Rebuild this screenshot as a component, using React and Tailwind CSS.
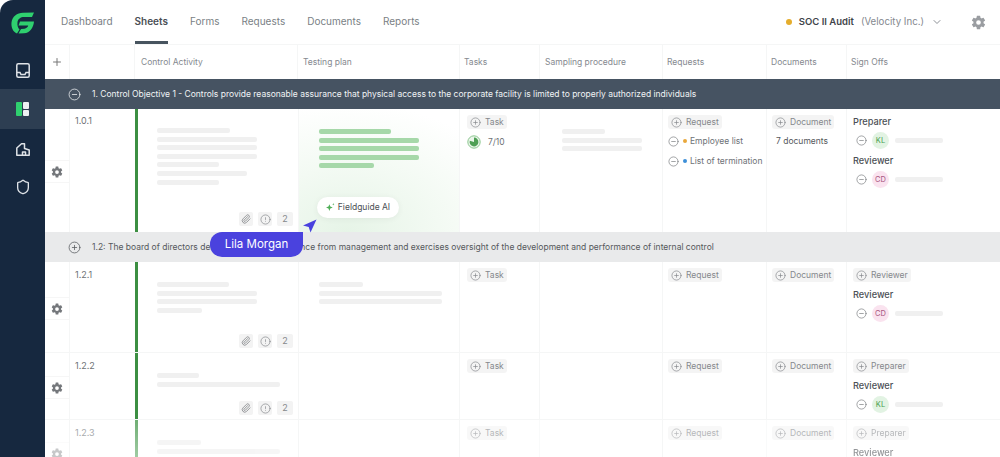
import React from 'react';
import { ChevronDown, CircleAlert, CircleMinus, CirclePlus, Paperclip, Plus, Shield } from 'lucide-react';
import { IoSettingsSharp } from 'react-icons/io5';

const tabs = ['Dashboard', 'Sheets', 'Forms', 'Requests', 'Documents', 'Reports'];
const columns = [
    { name: 'Control Activity', pad: 'pl-[6px]' },
    { name: 'Testing plan', pad: 'pl-[5px]' },
    { name: 'Tasks', pad: 'pl-[4px]' },
    { name: 'Sampling procedure', pad: 'pl-[5px]' },
    { name: 'Requests', pad: 'pl-[4px]' },
    { name: 'Documents', pad: 'pl-[4px]' },
    { name: 'Sign Offs', pad: 'pl-[4px]' },
];
const gridCols = 'grid grid-cols-[25px_65px_163px_162px_80px_123px_104px_80px_1fr]';

const Logo = () => (
    <svg width="24" height="22" viewBox="0 0 24 22" fill="#2fd06f">
        <path d="M23 0.5 L21 5 L13 5 C9.5 5 7 7 6.5 10 C6 13.5 7 16 8.5 17.5 L6 21.5 C2 20 0 15.5 0.5 10.5 C1.2 4.5 6 0.8 12 0.7 Z" />
        <path d="M9 9.5 L23 9.5 C22.5 15.5 19 21 13 21.2 L7.5 21.4 L10 17 L13.5 16.8 C15.5 16.5 16.8 15.2 17.2 13.6 L7.5 13.6 Z" />
    </svg>
);

const InboxIcon = () => (
    <svg width="14" height="15" viewBox="0 0 14 15" fill="none" stroke="#dfe3e8" strokeWidth="1.5">
        <rect x="0.8" y="0.8" width="12.4" height="13.4" rx="1.5" />
        <path d="M1 9.5h3l1 2h4l1-2h3" />
    </svg>
);

const SheetsIcon = () => (
    <div className="flex gap-[1px] w-[13px] h-[14px]">
        <div className="w-[6px] bg-[#2fd06f] rounded-[1px]"></div>
        <div className="flex flex-col gap-[1px] w-[6px]">
            <div className="flex-1 bg-[#eef1f3] rounded-[1px]"></div>
            <div className="flex-1 bg-[#eef1f3] rounded-[1px]"></div>
        </div>
    </div>
);

const BuildingIcon = () => (
    <svg width="14" height="13" viewBox="0 0 14 13" fill="none" stroke="#dfe3e8" strokeWidth="1.5" strokeLinejoin="round">
        <path d="M0.8 12.2V5L5.5 0.8H8.5V5.500L13.200 7V12.200Z" />
        <path d="M6.500 12.200V9H9.500V12.200" />
    </svg>
);

const Sidebar = () => (
    <div className="w-[45px] shrink-0 bg-[#16283f] rounded-tl-[13px] flex flex-col items-center">
        <div className="h-[44px] pt-[2px] flex items-center justify-center">
            <Logo />
        </div>
        <div className="h-[45px] w-full pt-[7px] flex items-center justify-center">
            <InboxIcon />
        </div>
        <div className="h-[40px] w-full bg-[#2d3e52] flex items-center justify-center">
            <SheetsIcon />
        </div>
        <div className="h-[40px] w-full flex items-center justify-center">
            <BuildingIcon />
        </div>
        <div className="h-[36px] w-full flex items-center justify-center">
            <Shield size={16} color="#dfe3e8" strokeWidth={2} />
        </div>
    </div>
);

const TopNav = () => (
    <div className="h-[44px] shrink-0 flex items-center pl-[16px] pr-[14px] text-[10px] text-[#7a7f85]">
        <div className="flex gap-[22px] h-full">
            {tabs.map((tab) => (
                <div
                    key={tab}
                    className={`h-full flex items-center pt-[1px] border-b-[3px] ${
                        tab === 'Sheets' ? 'border-[#47545f] text-[#4a4f55] font-semibold' : 'border-transparent'
                    }`}
                >
                    {tab}
                </div>
            ))}
        </div>
        <div className="ml-auto flex items-center">
            <span className="w-[6px] h-[6px] rounded-full bg-[#e5ad2c]"></span>
            <span className="ml-[7px] text-[9.500px] font-semibold text-[#3f444a]">SOC II Audit</span>
            <span className="ml-[7px] text-[9.700px] text-[#85898f]">(Velocity Inc.)</span>
            <ChevronDown size={12} color="#8c9096" className="ml-[7px]" />
            <IoSettingsSharp size={15} color="#9a9da1" className="ml-[28px]" />
        </div>
    </div>
);

const HeaderRow = () => (
    <div className={`${gridCols} h-[35px] shrink-0 border-t border-[#f5f6f6] text-[8.500px] text-[#85898f]`}>
        <div className="flex items-center justify-center border-r border-[#f5f6f6]">
            <Plus size={12} color="#777" />
        </div>
        <div className="border-r border-[#f5f6f6]"></div>
        {columns.map((col) => (
            <div key={col.name} className={`flex items-center border-r border-[#f5f6f6] last:border-r-0 ${col.pad}`}>
                {col.name}
            </div>
        ))}
    </div>
);

const Band = ({ dark, text }) => (
    <div
        className={`h-[30px] shrink-0 flex items-center pl-[23px] text-[8.500px] ${
            dark ? 'bg-[#465362] text-[#f1f3f5]' : 'bg-[#e9eaeb] text-[#55585c]'
        }`}
    >
        {dark ? <CircleMinus size={13} strokeWidth={1.4} /> : <CirclePlus size={13} strokeWidth={1.4} />}
        <span className="ml-[11px] whitespace-nowrap">{text}</span>
    </div>
);

// grey or green placeholder lines, widths in px
const Bars = ({ widths, color = 'bg-[#f0f0f0]' }) => (
    <div className="flex flex-col gap-[3.600px]">
        {widths.map((w, i) => (
            <div key={i} className={`h-[5px] rounded-[2px] ${color}`} style={{ width: w }}></div>
        ))}
    </div>
);

const AddChip = ({ label }) => (
    <div className="inline-flex items-center gap-[4px] h-[14px] px-[3px] rounded-[3px] bg-[#f4f4f4] text-[8.500px] text-[#85888c] self-start">
        <CirclePlus size={11} strokeWidth={1.5} />
        {label}
    </div>
);

const MetaChips = () => (
    <div className="mt-auto flex justify-end gap-[5px] pr-[5px] text-[#85888c]">
        <div className="w-[14px] h-[14px] rounded-[2px] bg-[#f3f3f3] flex items-center justify-center">
            <Paperclip size={10} />
        </div>
        <div className="w-[14px] h-[14px] rounded-[2px] bg-[#f3f3f3] flex items-center justify-center">
            <CircleAlert size={11} strokeWidth={1.5} />
        </div>
        <div className="w-[16px] h-[14px] rounded-[2px] bg-[#f3f3f3] flex items-center justify-center text-[9px]">2</div>
    </div>
);

const Person = ({ initials }) => (
    <div className="flex items-center pl-[3px] mt-[3px]">
        <CircleMinus size={11} strokeWidth={1.4} color="#707377" />
        <div
            className={`ml-[5px] w-[17px] h-[17px] rounded-full flex items-center justify-center text-[7.500px] ${
                initials === 'KL' ? 'bg-[#e2f3e3] text-[#46a04e]' : 'bg-[#fae3ef] text-[#a8567f]'
            }`}
        >
            {initials}
        </div>
        <div className="ml-[6px] w-[48px] h-[5px] rounded-[2px] bg-[#f0f0f0]"></div>
    </div>
);

const RoleLabel = ({ children }) => <div className="text-[9.200px] leading-[14px] font-medium text-[#4b4f54]">{children}</div>;

const RequestItem = ({ dot, label }) => (
    <div className="flex items-center h-[14px] text-[8.500px] text-[#6d7176] whitespace-nowrap">
        <CircleMinus size={11} strokeWidth={1.4} color="#707377" />
        <span className={`ml-[4px] w-[4px] h-[4px] rounded-full ${dot}`}></span>
        <span className="ml-[3px]">{label}</span>
    </div>
);

const Row = ({ id, height, fade, bars, barsTop, chips, testing, signOff, initials, gearTop }) => (
    <div className={`${gridCols} shrink-0 border-b border-[#f5f6f6]`} style={{ height }}>
        <div className="border-r border-[#f5f6f6] flex flex-col" style={{ paddingTop: gearTop }}>
            <div className={`h-[23px] shrink-0 flex items-center justify-center border-y border-[#f6f6f6] ${fade ? 'opacity-40' : ''}`}>
                <IoSettingsSharp size={12} color="#74777b" />
            </div>
        </div>
        <div className={`pl-[5px] pt-[6px] text-[9px] text-[#6d7176] ${fade ? 'opacity-60' : ''}`}>{id}</div>
        <div
            className={`pl-[22px] flex flex-col pb-[4px] bg-no-repeat bg-[length:3px_100%] ${
                fade ? 'bg-[linear-gradient(#6fae74,#c5e2c7)]' : 'bg-[linear-gradient(#3c8f42,#3c8f42)]'
            }`}
            style={{ paddingTop: barsTop }}
        >
            <div className={fade ? 'opacity-60' : ''}>
                <Bars widths={bars} />
            </div>
            {chips && <MetaChips />}
        </div>
        <div className="border-x border-[#f5f6f6] pl-[20px] pt-[20px]">
            {testing && <Bars widths={testing} />}
        </div>
        <div className={`border-r border-[#f5f6f6] pl-[7px] pt-[6px] flex flex-col ${fade ? 'opacity-60' : ''}`}>
            <AddChip label="Task" />
        </div>
        <div className="border-r border-[#f5f6f6]"></div>
        <div className={`border-r border-[#f5f6f6] pl-[5px] pt-[6px] flex flex-col ${fade ? 'opacity-60' : ''}`}>
            <AddChip label="Request" />
        </div>
        <div className={`border-r border-[#f5f6f6] pl-[5px] pt-[6px] flex flex-col ${fade ? 'opacity-60' : ''}`}>
            <AddChip label="Document" />
        </div>
        <div className={`pl-[6px] pt-[6px] flex flex-col ${fade ? 'opacity-60' : ''}`}>
            <AddChip label={signOff} />
            <div className="mt-[6px]">
                <RoleLabel>Reviewer</RoleLabel>
            </div>
            <Person initials={initials} />
        </div>
    </div>
);

const FirstRow = () => (
    <div className={`${gridCols} h-[123px] shrink-0`}>
        <div className="border-r border-[#f5f6f6] pt-[51px]">
            <div className="h-[23px] flex items-center justify-center border-y border-[#f6f6f6]">
                <IoSettingsSharp size={12} color="#74777b" />
            </div>
        </div>
        <div className="pl-[5px] pt-[5px] text-[9px] text-[#6d7176]">1.0.1</div>
        <div className="pl-[22px] pt-[19px] pb-[6px] flex flex-col bg-no-repeat bg-[length:3px_100%] bg-[linear-gradient(#3c8f42,#3c8f42)]">
            <Bars widths={[73, 100, 100, 100, 62, 90, 62]} />
            <MetaChips />
        </div>
        <div className="relative border-x border-[#f5f6f6] pl-[20px] pt-[20px] bg-[radial-gradient(ellipse_115%_105%_at_30%_100%,#e6f4e7_0%,#f3faf3_50%,#ffffff_100%)]">
            <Bars widths={[72, 100, 100, 100, 55]} color="bg-[#a6d8a9]" />
            <div className="absolute left-[18px] top-[88px] w-[82px] h-[21px] rounded-full bg-white shadow-[0_1px_6px_rgba(0,0,0,0.06)] flex items-center justify-center gap-[3px] text-[8.500px] text-[#4b4f54]">
                <svg width="9" height="9" viewBox="0 0 8 8" fill="#4fae57">
                    <path d="M3 1l.8 2.200L6 4l-2.200.8L3 7l-.8-2.200L0 4l2.200-.8z" />
                    <path d="M6.500 0l.3.8.8.3-.8.3-.3.8-.3-.8-.8-.3.8-.3z" />
                </svg>
                Fieldguide AI
            </div>
        </div>
        <div className="border-r border-[#f5f6f6] pl-[7px] pt-[6px] flex flex-col">
            <AddChip label="Task" />
            <div className="flex items-center mt-[6px] text-[8.500px] text-[#6d7176]">
                <svg width="14" height="14" viewBox="0 0 14 14">
                    <circle cx="7" cy="7" r="6.200" fill="#eaf5ea" stroke="#8cc790" strokeWidth="1" />
                    <path d="M7 7V2.600A4.400 4.400 0 1 1 2.800 5.700z" fill="#4f9f55" />
                </svg>
                <span className="ml-[7px]">7/10</span>
            </div>
        </div>
        <div className="border-r border-[#f5f6f6] pl-[22px] pt-[20px]">
            <Bars widths={[43, 80, 80]} />
        </div>
        <div className="border-r border-[#f5f6f6] pl-[5px] pt-[6px] flex flex-col">
            <AddChip label="Request" />
            <div className="flex flex-col gap-[6px] mt-[5px]">
                <RequestItem dot="bg-[#e9a83c]" label="Employee list" />
                <RequestItem dot="bg-[#3d8fd8]" label="List of termination" />
            </div>
        </div>
        <div className="border-r border-[#f5f6f6] pl-[5px] pt-[6px] flex flex-col">
            <AddChip label="Document" />
            <div className="mt-[6px] pl-[4px] text-[8.500px] text-[#55585c]">7 documents</div>
        </div>
        <div className="pl-[6px] pt-[6px] flex flex-col">
            <RoleLabel>Preparer</RoleLabel>
            <Person initials="KL" />
            <div className="mt-[5px]">
                <RoleLabel>Reviewer</RoleLabel>
            </div>
            <Person initials="CD" />
        </div>
    </div>
);

const App = () => {
    return (
        <div className="w-[1000px] h-[457px] overflow-hidden bg-white flex font-['Inter',sans-serif] blur-[0.5px]">
            <Sidebar />
            <div className="relative flex-1 min-w-0 flex flex-col">
                <TopNav />
                <HeaderRow />
                <Band dark text="1. Control Objective 1 - Controls provide reasonable assurance that physical access to the corporate facility is limited to properly authorized individuals" />
                <FirstRow />
                <Band text="1.2: The board of directors demonstrates independence from management and exercises oversight of the development and performance of internal control" />
                <Row
                    id="1.2.1"
                    height={91}
                    gearTop={35}
                    barsTop={20}
                    bars={[72, 100, 100, 45]}
                    chips
                    testing={[44, 123, 123]}
                    signOff="Reviewer"
                    initials="CD"
                />
                <Row
                    id="1.2.2"
                    height={67}
                    gearTop={23}
                    barsTop={20}
                    bars={[42, 123]}
                    chips
                    signOff="Preparer"
                    initials="KL"
                />
                <Row
                    id="1.2.3"
                    height={67}
                    gearTop={22}
                    barsTop={20}
                    fade
                    bars={[44, 123]}
                    signOff="Preparer"
                    initials="KL"
                />

                {/* cursor and name tag sit on top of the table */}
                <div className="absolute left-[165px] top-[232px] w-[93px] h-[25px] rounded-[12px] rounded-tr-none bg-[#4a42de] text-white text-[11.500px] flex items-center justify-center">
                    Lila Morgan
                </div>
                <svg className="absolute left-[258px] top-[219px]" width="14" height="14" viewBox="0 0 14 14" fill="#4a42de">
                    <path d="M13.500 0.500L7.500 13.500L5.700 8L0 6.500z" />
                </svg>
            </div>
        </div>
    );
};

export default App;
